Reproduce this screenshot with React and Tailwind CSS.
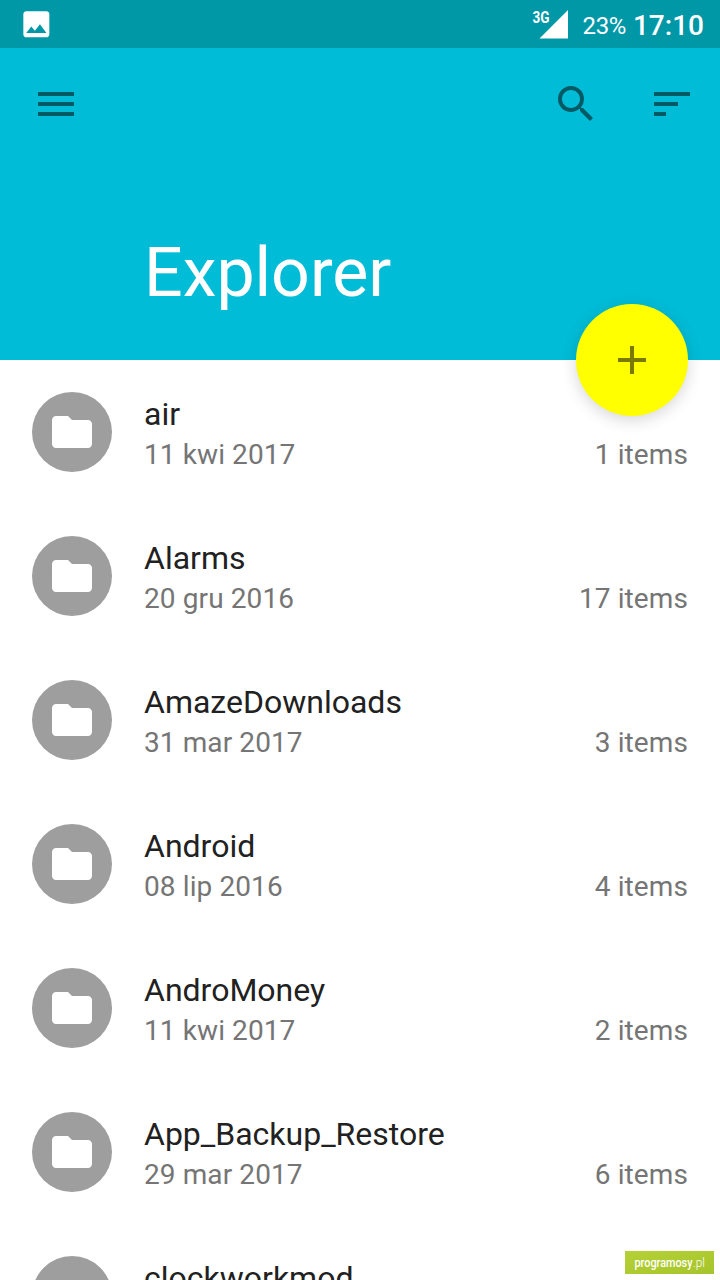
import React from "react";
import {
  MdAdd,
  MdFolder,
  MdImage,
  MdMenu,
  MdSearch,
  MdSort,
} from "react-icons/md";

const folders = [
  { name: "air", date: "11 kwi 2017", count: 1 },
  { name: "Alarms", date: "20 gru 2016", count: 17 },
  { name: "AmazeDownloads", date: "31 mar 2017", count: 3 },
  { name: "Android", date: "08 lip 2016", count: 4 },
  { name: "AndroMoney", date: "11 kwi 2017", count: 2 },
  { name: "App_Backup_Restore", date: "29 mar 2017", count: 6 },
  { name: "clockworkmod" },
];

function StatusBar() {
  return (
    <div className="flex h-12 items-center justify-between bg-[#0097a7] pl-[18.7px] pr-4 text-white">
      <MdImage size={34.67} />
      <div className="flex items-center">
        <svg width="38" height="30" viewBox="0 0 38 30" fill="currentColor">
          <path d="M36 1v28.5H7.5z" />
          <text
            x="0.5"
            y="13.5"
            fontSize="16"
            fontWeight="700"
            textLength="17"
            lengthAdjust="spacingAndGlyphs"
          >
            3G
          </text>
        </svg>
        <span className="ml-[13px] pt-[3px] text-2xl leading-[30px] tracking-[-0.4px]">
          23%
        </span>
        <span className="ml-[7px] pt-[3px] text-[28px] leading-[30px] font-medium">
          17:10
        </span>
      </div>
    </div>
  );
}

function Header() {
  return (
    <header className="relative flex h-[312px] flex-col justify-between bg-[#00bcd7]">
      <div className="flex items-center px-8 pt-8 text-[#005a66]">
        <MdMenu size={48} />
        <MdSearch size={48} className="ml-auto" />
        <MdSort size={48} className="-mr-2 ml-12" />
      </div>
      <h1 className="pb-[47px] pl-36 text-[68px] leading-20 text-white">
        Explorer
      </h1>
      <button className="absolute right-8 -bottom-14 flex h-28 w-28 items-center justify-center rounded-full bg-[#ffff00] text-[#7a7a00] shadow-[0_4px_16px_rgba(0,0,0,0.16)]">
        <MdAdd size={48} />
      </button>
    </header>
  );
}

function FolderRow({ folder }) {
  return (
    <li className="flex h-36 items-center px-8">
      <div className="flex h-20 w-20 shrink-0 items-center justify-center rounded-full bg-[#9e9e9e] text-white">
        <MdFolder size={48} />
      </div>
      <div className="ml-8 flex-1 pt-1.5">
        <p className="text-[32px] leading-10 text-[#212121]">{folder.name}</p>
        <div className="flex h-[42px] justify-between text-[28px] leading-[42px] tracking-[0.1px] text-[#757575]">
          <span>{folder.date}</span>
          {folder.count && <span>{folder.count} items</span>}
        </div>
      </div>
    </li>
  );
}

export default function App() {
  return (
    <div className="relative h-[1280px] w-[720px] overflow-hidden bg-white font-[Roboto,sans-serif]">
      <StatusBar />
      <Header />
      <ul>
        {folders.map((folder) => (
          <FolderRow key={folder.name} folder={folder} />
        ))}
      </ul>
      <div className="absolute right-1.5 bottom-1.5 flex h-[23px] w-[89px] items-center justify-center bg-linear-to-br from-[#b5d137] to-[#a6c42b] text-white">
        <svg width="80" height="22" viewBox="0 0 80 22" fill="currentColor">
          <text
            x="4.5"
            y="15"
            fontSize="13.5"
            fontWeight="500"
            textLength="58"
            lengthAdjust="spacingAndGlyphs"
          >
            programosy
          </text>
          <text
            x="63"
            y="15"
            fontSize="13.5"
            fontWeight="300"
            textLength="12"
            lengthAdjust="spacingAndGlyphs"
          >
            .pl
          </text>
        </svg>
      </div>
    </div>
  );
}
